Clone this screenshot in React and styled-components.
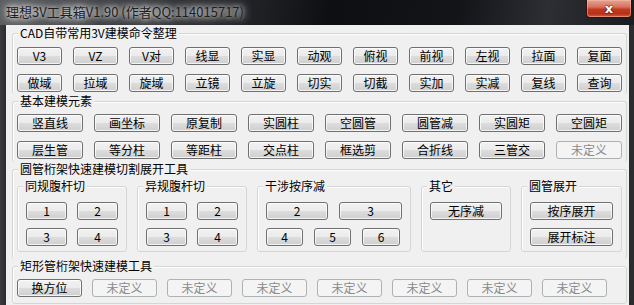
import React from "react";
import styled, { createGlobalStyle } from "styled-components";

const GlobalStyle = createGlobalStyle`
  html, body {
    margin: 0;
    padding: 0;
    width: 634px;
    height: 305px;
    overflow: hidden;
    background: #1c1e21;
  }
  #root { width: 634px; height: 305px; }
  * { box-sizing: border-box; }
`;

const Window = styled.div`
  width: 634px;
  height: 305px;
  display: flex;
  flex-direction: column;
  overflow: hidden;
  background: linear-gradient(90deg, #3a3c3f 0px, #2a2c2f 6px, #1a1c1f 40%, #0f1114 70%, #2a2c30 100%);
  font-family: "Noto Sans CJK SC", "Noto Sans", sans-serif;
`;

const TitleBar = styled.div`
  height: 25px;
  flex: none;
  display: flex;
  justify-content: space-between;
  align-items: flex-start;
  background: linear-gradient(100deg, #5a5c5f 0%, #3b3d41 18%, #26282c 36%, #0d0f12 52%, #121418 72%, #2c2e33 86%, #1b1d21 100%);
`;

const TitleText = styled.div`
  padding: 4px 0 0 6px;
  font-size: 13px;
  line-height: 16px;
  color: #1e1e1e;
  white-space: nowrap;
  text-shadow: 0 0 4px #e8e8e8, 0 0 8px #d8d8d8, 0 0 12px rgba(220, 220, 220, 0.8),
    0 0 16px rgba(200, 200, 200, 0.6);
`;

const CloseButton = styled.div`
  width: 46px;
  height: 18px;
  margin-right: 2px;
  display: flex;
  align-items: center;
  justify-content: center;
  border: 1px solid #3a0d08;
  border-top: none;
  border-radius: 0 0 4px 4px;
  background: linear-gradient(#e4a493 0%, #d8735f 40%, #c43a20 55%, #b8301a 80%, #d0603f 100%);
  box-shadow: inset 0 0 0 1px rgba(255, 200, 180, 0.45);
  color: #fff;
  font: bold 13px/16px "DejaVu Sans", sans-serif;
  text-shadow: 0 0 2px #4a1008, 0 0 1px #4a1008;
`;

const Client = styled.div`
  flex: 1;
  margin: 0 5px 0 6px;
  background: #f0f0f0;
  display: flex;
  flex-direction: column;
  overflow: hidden;
`;

const Group = styled.fieldset`
  margin: ${(p) => p.$mt}px 2px 0 6px;
  padding: 0;
  min-width: 0;
  border: 1px solid #d5d5d5;
  border-bottom: ${(p) => (p.$noBottom ? "none" : "1px solid #d5d5d5")};
  border-radius: 3px;
  box-shadow: inset 1px 1px 0 #ffffff;
  flex: none;
`;

const Legend = styled.legend`
  margin-left: 5px;
  padding: 0 2px;
  font-size: 12px;
  line-height: 14px;
  height: 14px;
  color: #000;
  background: #f0f0f0;
  white-space: nowrap;
`;

const ButtonGrid = styled.div`
  display: grid;
  grid-template-columns: repeat(${(p) => p.$cols}, ${(p) => p.$w}px);
  column-gap: ${(p) => p.$gap}px;
  row-gap: 9px;
  padding: ${(p) => p.$pt}px 4px ${(p) => p.$pb}px 4px;
`;

const Btn = styled.button`
  height: 18px;
  margin: 0;
  padding: 0;
  border: 1px solid ${(p) => (p.disabled ? "#adb2b5" : "#707070")};
  border-radius: 3px;
  background: ${(p) =>
    p.disabled
      ? "#f4f4f4"
      : "linear-gradient(#f2f2f2 0%, #ebebeb 50%, #dddddd 50%, #cfcfcf 100%)"};
  box-shadow: ${(p) => (p.disabled ? "none" : "inset 0 0 0 1px rgba(255,255,255,0.75)")};
  font-family: "Noto Sans CJK SC", "Noto Sans", sans-serif;
  font-size: 12px;
  line-height: 16px;
  color: ${(p) => (p.disabled ? "#8a8a8a" : "#000")};
  white-space: nowrap;
  overflow: hidden;
  cursor: default;
`;

const SubRow = styled.div`
  display: flex;
  gap: 10px;
  padding: 3px 4px 7px 4px;
`;

const SubGroup = styled.fieldset`
  width: ${(p) => p.$w}px;
  flex: none;
  margin: 0;
  padding: 0;
  min-width: 0;
  border: 1px solid #d5d5d5;
  border-radius: 3px;
  box-shadow: inset 1px 1px 0 #ffffff;
`;

const SubBody = styled.div`
  display: flex;
  flex-direction: column;
  gap: 8px;
  padding: 9px 0 5px 8px;
`;

const SubLine = styled.div`
  display: flex;
  gap: ${(p) => p.$gap || 10}px;
`;

const SizedBtn = styled(Btn)`
  width: ${(p) => p.$w}px;
  flex: none;
`;

const row1 = ["V3", "VZ", "V对", "线显", "实显", "动观", "俯视", "前视", "左视", "拉面", "复面"];
const row2 = ["做域", "拉域", "旋域", "立镜", "立旋", "切实", "切截", "实加", "实减", "复线", "查询"];
const basic1 = ["竖直线", "画坐标", "原复制", "实圆柱", "空圆管", "圆管减", "实圆矩", "空圆矩"];
const basic2 = ["层生管", "等分柱", "等距柱", "交点柱", "框选剪", "合折线", "三管交", "未定义"];
const rect = ["换方位", "未定义", "未定义", "未定义", "未定义", "未定义", "未定义", "未定义"];

export default function App() {
  return (
    <>
      <GlobalStyle />
      <Window>
        <TitleBar>
          <TitleText>理想3V工具箱V1.90 (作者QQ:114015717)</TitleText>
          <CloseButton>x</CloseButton>
        </TitleBar>
        <Client>
          <Group $mt={1} $noBottom>
            <Legend>CAD自带常用3V建模命令整理</Legend>
            <ButtonGrid $cols={11} $w={45} $gap={11} $pt={7} $pb={2}>
              {[...row1, ...row2].map((t, i) => (
                <Btn key={i}>{t}</Btn>
              ))}
            </ButtonGrid>
          </Group>
          <Group $mt={0} $noBottom>
            <Legend>基本建模元素</Legend>
            <ButtonGrid $cols={8} $w={66} $gap={11} $pt={6} $pb={3}>
              {[...basic1, ...basic2].map((t, i) => (
                <Btn key={i} disabled={t === "未定义"}>
                  {t}
                </Btn>
              ))}
            </ButtonGrid>
          </Group>
          <Group $mt={0} $noBottom>
            <Legend>圆管桁架快速建模切割展开工具</Legend>
            <SubRow>
              <SubGroup $w={110}>
                <Legend>同规腹杆切</Legend>
                <SubBody>
                  <SubLine>
                    <SizedBtn $w={41}>1</SizedBtn>
                    <SizedBtn $w={41}>2</SizedBtn>
                  </SubLine>
                  <SubLine>
                    <SizedBtn $w={41}>3</SizedBtn>
                    <SizedBtn $w={41}>4</SizedBtn>
                  </SubLine>
                </SubBody>
              </SubGroup>
              <SubGroup $w={110}>
                <Legend>异规腹杆切</Legend>
                <SubBody>
                  <SubLine>
                    <SizedBtn $w={41}>1</SizedBtn>
                    <SizedBtn $w={41}>2</SizedBtn>
                  </SubLine>
                  <SubLine>
                    <SizedBtn $w={41}>3</SizedBtn>
                    <SizedBtn $w={41}>4</SizedBtn>
                  </SubLine>
                </SubBody>
              </SubGroup>
              <SubGroup $w={154}>
                <Legend>干涉按序减</Legend>
                <SubBody>
                  <SubLine $gap={11}>
                    <SizedBtn $w={62}>2</SizedBtn>
                    <SizedBtn $w={63}>3</SizedBtn>
                  </SubLine>
                  <SubLine $gap={11}>
                    <SizedBtn $w={37}>4</SizedBtn>
                    <SizedBtn $w={37}>5</SizedBtn>
                    <SizedBtn $w={38}>6</SizedBtn>
                  </SubLine>
                </SubBody>
              </SubGroup>
              <SubGroup $w={90}>
                <Legend>其它</Legend>
                <SubBody>
                  <SubLine>
                    <SizedBtn $w={72}>无序减</SizedBtn>
                  </SubLine>
                  <SubLine>
                    <div style={{ height: 18 }} />
                  </SubLine>
                </SubBody>
              </SubGroup>
              <SubGroup $w={101}>
                <Legend>圆管展开</Legend>
                <SubBody>
                  <SubLine>
                    <SizedBtn $w={83}>按序展开</SizedBtn>
                  </SubLine>
                  <SubLine>
                    <SizedBtn $w={83}>展开标注</SizedBtn>
                  </SubLine>
                </SubBody>
              </SubGroup>
            </SubRow>
          </Group>
          <Group $mt={0}>
            <Legend>矩形管桁架快速建模工具</Legend>
            <ButtonGrid $cols={8} $w={65} $gap={10} $pt={6} $pb={6}>
              {rect.map((t, i) => (
                <Btn key={i} disabled={t === "未定义"}>
                  {t}
                </Btn>
              ))}
            </ButtonGrid>
          </Group>
        </Client>
      </Window>
    </>
  );
}
